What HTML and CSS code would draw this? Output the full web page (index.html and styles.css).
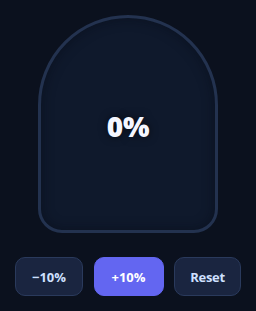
FILE: index.html
```html
<!DOCTYPE html>
<html lang="en">
<head>
    <meta charset="UTF-8">
    <meta name="viewport" content="width=device-width, initial-scale=1.0">
    <title>Progress</title>
    <link rel="stylesheet" href="styles.css">
</head>
<body>
    <div class="app">
        <div class="dome">
            <span class="value">0%</span>
        </div>
        <div class="controls">
            <button class="btn btn-dec">&minus;10%</button>
            <button class="btn btn-inc primary">+10%</button>
            <button class="btn btn-reset">Reset</button>
        </div>
    </div>
</body>
</html>
```

FILE: styles.css
```css
html, body {
    margin: 0;
    padding: 0;
    background: #0b111e;
}
body {
    font-family: "Open Sans", "Noto Sans", sans-serif;
}
.app {
    width: 256px;
    height: 311px;
    display: flex;
    flex-direction: column;
    align-items: center;
    padding-top: 15px;
    box-sizing: border-box;
}
.dome {
    width: 180px;
    height: 218px;
    box-sizing: border-box;
    border: 3px solid #23324f;
    border-radius: 90px 90px 24px 24px;
    background: #0f192c;
    box-shadow: inset 0 0 12px rgba(5, 10, 20, 0.5);
    display: flex;
    align-items: center;
    justify-content: center;
}
.value {
    color: #f5f7ff;
    font-size: 28px;
    font-weight: 800;
    letter-spacing: -0.3px;
    text-shadow: 0 0 8px rgba(0, 0, 0, 0.6);
    margin-top: 4px;
}
.controls {
    display: flex;
    gap: 10.5px;
    margin-top: 24px;
}
.btn {
    height: 39px;
    padding: 0;
    border: 1px solid #2a3a5c;
    border-radius: 10px;
    background: #1a2540;
    color: #cfe0ff;
    font-family: "Open Sans", "Noto Sans", sans-serif;
    font-size: 13px;
    font-weight: 700;
    cursor: pointer;
}
.btn-dec {
    width: 68px;
}
.btn-inc {
    width: 70px;
}
.btn-reset {
    width: 67px;
    letter-spacing: -0.3px;
}
.btn.primary {
    background: #6366f1;
    border-color: #6366f1;
    color: #ffffff;
}
```
